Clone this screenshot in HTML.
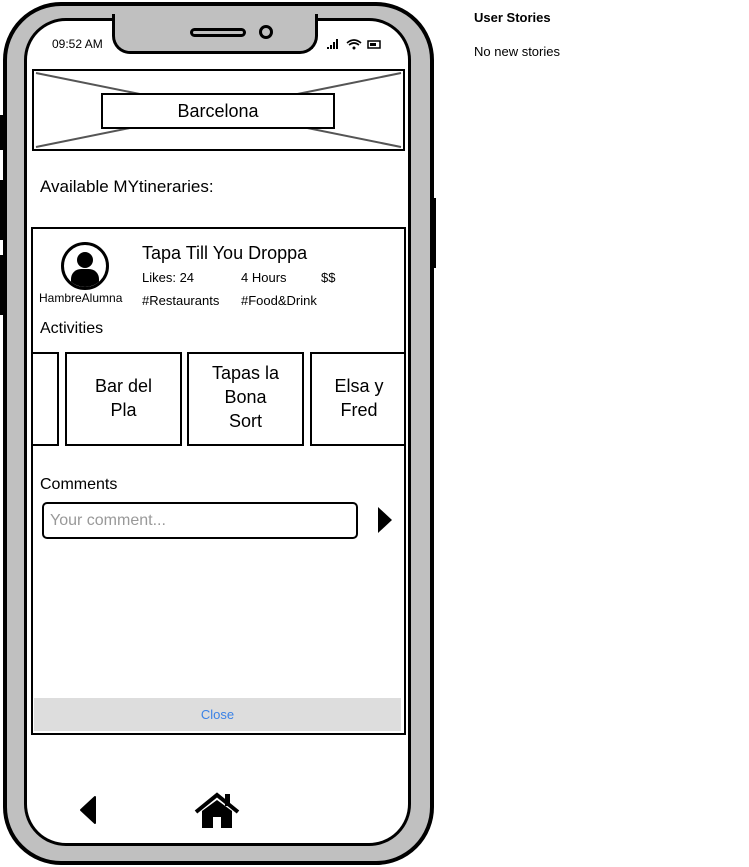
<!DOCTYPE html>
<html><head><style>
*{margin:0;padding:0;box-sizing:border-box}
body{width:749px;height:867px;background:#fff;position:relative;font-family:"Liberation Sans",sans-serif;color:#000;overflow:hidden}
.a{position:absolute}
.b{border:2px solid #000}
</style></head><body>
<div class="a" style="left:0;top:115px;width:5px;height:35px;background:#000"></div>
<div class="a" style="left:0;top:180px;width:5px;height:60px;background:#000"></div>
<div class="a" style="left:0;top:255px;width:5px;height:60px;background:#000"></div>
<div class="a" style="left:431px;top:198px;width:5px;height:70px;background:#000"></div>
<div class="a" style="left:3px;top:2px;width:431px;height:863px;border:4px solid #000;border-radius:58px;background:#c0c0c0"></div>
<div class="a" style="left:24px;top:18px;width:387px;height:828px;border:3px solid #000;border-radius:42px;background:#fff"></div>
<div class="a" style="left:112px;top:14px;width:206px;height:40px;background:#c0c0c0;border:3px solid #000;border-top:none;border-radius:0 0 18px 18px"></div>
<div class="a" style="left:190px;top:28px;width:56px;height:9px;border:3px solid #000;border-radius:5px"></div>
<div class="a" style="left:259px;top:25px;width:14px;height:14px;border:3px solid #000;border-radius:50%"></div>
<div class="a" style="left:52px;top:37px;font-size:12px">09:52 AM</div>
<svg class="a" style="left:326px;top:37px" width="58" height="14"><rect x="1" y="10" width="2" height="2"/><rect x="4" y="8" width="2" height="4"/><rect x="7" y="5" width="2" height="7"/><rect x="10" y="2" width="2" height="10"/><path d="M21 6Q28 0 35 6M23 8Q28 4 33 8" fill="none" stroke="#000" stroke-width="1.6"/><circle cx="28" cy="11" r="1.5"/><rect x="42" y="4" width="12" height="7" fill="none" stroke="#000" stroke-width="1.5"/><rect x="44" y="6" width="6" height="3"/></svg>
<svg class="a" style="left:0;top:0" width="440" height="160"><rect x="33" y="70" width="371" height="80" fill="none" stroke="#000" stroke-width="2"/><path d="M36 73L401 147M401 73L36 147" stroke="#555" stroke-width="2"/></svg>
<div class="a b" style="left:101px;top:93px;width:234px;height:36px;background:#fff;text-align:center;font-size:18px;line-height:32px">Barcelona</div>
<div class="a" style="left:40px;top:177px;font-size:17px">Available MYtineraries:</div>
<div class="a b" style="left:31px;top:227px;width:375px;height:508px"></div>
<div class="a" style="left:61px;top:242px;width:48px;height:48px;border:3px solid #000;border-radius:50%;overflow:hidden"><div class="a" style="left:13px;top:7px;width:16px;height:16px;background:#000;border-radius:50%"></div><div class="a" style="left:7px;top:24px;width:28px;height:22px;background:#000;border-radius:10px 10px 0 0"></div></div>
<div class="a" style="left:39px;top:291px;font-size:12px">HambreAlumna</div>
<div class="a" style="left:142px;top:243px;font-size:18px">Tapa Till You Droppa</div>
<div class="a" style="left:142px;top:270px;font-size:13px">Likes: 24</div>
<div class="a" style="left:241px;top:270px;font-size:13px">4 Hours</div>
<div class="a" style="left:321px;top:270px;font-size:13px">$$</div>
<div class="a" style="left:142px;top:293px;font-size:13px">#Restaurants</div>
<div class="a" style="left:241px;top:293px;font-size:13px">#Food&amp;Drink</div>
<div class="a" style="left:40px;top:320px;font-size:16px">Activities</div>
<div class="a b" style="left:31px;top:352px;width:28px;height:94px;border-left:none"></div>
<div class="a b" style="left:65px;top:352px;width:117px;height:94px;font-size:18px;text-align:center;padding-top:20px;line-height:24px">Bar del<br>Pla</div>
<div class="a b" style="left:187px;top:352px;width:117px;height:94px;font-size:18px;text-align:center;padding-top:7px;line-height:24px">Tapas la<br>Bona<br>Sort</div>
<div class="a b" style="left:310px;top:352px;width:96px;height:94px;font-size:18px;text-align:center;padding-top:20px;line-height:24px;border-right:none">Elsa y<br>Fred</div>
<div class="a" style="left:40px;top:476px;font-size:16px">Comments</div>
<div class="a b" style="left:42px;top:502px;width:316px;height:37px;border-radius:5px;font-size:16px;color:#999;padding:8px 6px">Your comment...</div>
<svg class="a" style="left:374px;top:505px" width="20" height="30"><path d="M4 2L18 15L4 28Z" fill="#000"/></svg>
<div class="a" style="left:34px;top:698px;width:367px;height:33px;background:#ddd;color:#3b82e6;text-align:center;font-size:13px;line-height:34px">Close</div>
<div class="a" style="left:31px;top:733px;width:375px;height:2px;background:#000"></div>
<svg class="a" style="left:78px;top:795px" width="20" height="30"><path d="M17 2L3 15L17 28Z" fill="#000" stroke="#000" stroke-linejoin="round" stroke-width="2"/></svg>
<svg class="a" style="left:194px;top:792px" width="46" height="38"><path d="M2 20L23 3L44 20" fill="none" stroke="#000" stroke-width="4"/><rect x="31" y="2" width="5" height="12" fill="#000"/><path d="M8 19L23 8L38 19V36H27V25H19V36H8Z" fill="#000"/></svg>
<div class="a" style="left:474px;top:10px;font-size:13px;font-weight:bold">User Stories</div>
<div class="a" style="left:474px;top:44px;font-size:13px">No new stories</div>
</body></html>
